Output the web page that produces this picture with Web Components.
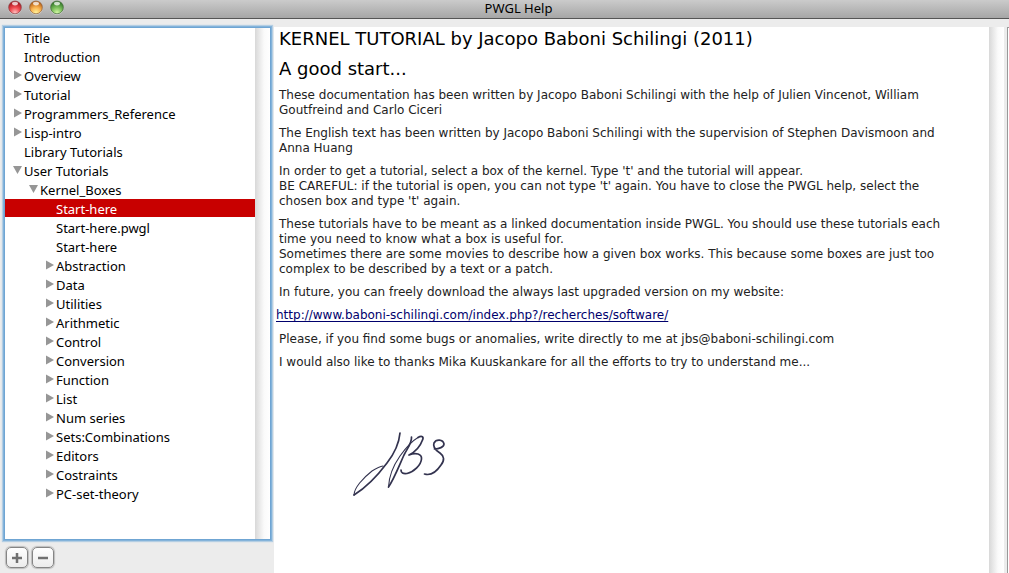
<!DOCTYPE html>
<html lang="en">
<head>
<meta charset="utf-8">
<title>PWGL Help</title>
<style>
html, body { margin: 0; height: 100%; }
body { background: #ececec; font-family: "Noto Sans", "Open Sans", sans-serif; }
</style>
</head>
<body>
<help-window></help-window>

<template id="window-t">
<style>
:host { display: flex; flex-direction: column; min-height: 100vh; background: #ececec; }
main { flex: 1; display: flex; padding-top: 8px; }
</style>
<title-bar>PWGL Help</title-bar>
<main>
<help-sidebar></help-sidebar>
<help-document></help-document>
</main>
</template>

<template id="title-t">
<style>
:host { display: grid; grid-template-columns: 1fr auto 1fr; height: 18px; box-sizing: content-box; border-bottom: 1px solid #555; background: linear-gradient(#cbcbcb, #a6a6a6); color: #000; font-size: 13px; line-height: 17px; }
.lights { display: flex; gap: 7px; padding-left: 8px; }
button { width: 14px; height: 15px; padding: 0; border: 0; background: none; }
svg { display: block; }
h1 { margin: 0; font: inherit; padding-left: 28px; }
</style>
<div class="lights">
<button aria-label="Close"><svg width="14" height="15" viewBox="0 0 14 15"><defs><radialGradient id="r" cx=".5" cy=".9" r=".8"><stop stop-color="#ffc0c0"/><stop offset=".5" stop-color="#f04a50"/><stop offset="1" stop-color="#a91820"/></radialGradient></defs><circle cx="7" cy="8" r="6.7" fill="#ddd"/><circle cx="7" cy="7.4" r="6.4" fill="url(#r)" stroke="#84464a" stroke-width=".7"/><ellipse cx="7" cy="3.6" rx="3" ry="1.8" fill="#fff" opacity=".75"/></svg></button>
<button aria-label="Minimize"><svg width="14" height="15" viewBox="0 0 14 15"><defs><radialGradient id="y" cx=".5" cy=".9" r=".8"><stop stop-color="#fff39a"/><stop offset=".5" stop-color="#fab350"/><stop offset="1" stop-color="#b96318"/></radialGradient></defs><circle cx="7" cy="8" r="6.7" fill="#ddd"/><circle cx="7" cy="7.4" r="6.4" fill="url(#y)" stroke="#8a6040" stroke-width=".7"/><ellipse cx="7" cy="3.6" rx="3" ry="1.8" fill="#fff" opacity=".75"/></svg></button>
<button aria-label="Zoom"><svg width="14" height="15" viewBox="0 0 14 15"><defs><radialGradient id="g" cx=".5" cy=".9" r=".8"><stop stop-color="#d2f8a4"/><stop offset=".5" stop-color="#7cbf5c"/><stop offset="1" stop-color="#357a2c"/></radialGradient></defs><circle cx="7" cy="8" r="6.7" fill="#ddd"/><circle cx="7" cy="7.4" r="6.4" fill="url(#g)" stroke="#47683f" stroke-width=".7"/><ellipse cx="7" cy="3.6" rx="3" ry="1.8" fill="#fff" opacity=".75"/></svg></button>
</div>
<h1><slot></slot></h1>
</template>

<template id="sidebar-t">
<style>
:host { display: flex; flex-direction: column; flex: 0 0 274px; }
.list { flex: 1; display: flex; margin: 1px 4px 0 5px; background: #fff; box-shadow: 0 0 0 1px #6fa5d3, 0 0 0 2px #84b3da, 0 0 1px 3px #b4cee3; }
nav { flex: 1; }
.track { width: 15px; background: linear-gradient(90deg, #d8d8d8, #ececec 35%, #fafafa 60%, #fff); }
footer { display: flex; gap: 4px; padding: 8px 6px 5px; }
button { width: 22px; height: 21px; padding: 0; border: 1px solid #858585; border-radius: 5px; background: linear-gradient(#fff, #ececec); box-shadow: 0 0 1px 1px #bdbdbd; display: grid; place-items: center; }
</style>
<div class="list">
<nav aria-label="Topics">
<tree-item>Title</tree-item>
<tree-item>Introduction</tree-item>
<tree-item arrow="closed">Overview</tree-item>
<tree-item arrow="closed">Tutorial</tree-item>
<tree-item arrow="closed">Programmers_Reference</tree-item>
<tree-item arrow="closed">Lisp-intro</tree-item>
<tree-item>Library Tutorials</tree-item>
<tree-item arrow="open">User Tutorials</tree-item>
<tree-item arrow="open" level="1">Kernel_Boxes</tree-item>
<tree-item level="2" selected>Start-here</tree-item>
<tree-item level="2">Start-here.pwgl</tree-item>
<tree-item level="2">Start-here</tree-item>
<tree-item arrow="closed" level="2">Abstraction</tree-item>
<tree-item arrow="closed" level="2">Data</tree-item>
<tree-item arrow="closed" level="2">Utilities</tree-item>
<tree-item arrow="closed" level="2">Arithmetic</tree-item>
<tree-item arrow="closed" level="2">Control</tree-item>
<tree-item arrow="closed" level="2">Conversion</tree-item>
<tree-item arrow="closed" level="2">Function</tree-item>
<tree-item arrow="closed" level="2">List</tree-item>
<tree-item arrow="closed" level="2">Num series</tree-item>
<tree-item arrow="closed" level="2">Sets:Combinations</tree-item>
<tree-item arrow="closed" level="2">Editors</tree-item>
<tree-item arrow="closed" level="2">Costraints</tree-item>
<tree-item arrow="closed" level="2">PC-set-theory</tree-item>
</nav>
<div class="track"></div>
</div>
<footer>
<button aria-label="Add"><svg width="12" height="12"><path d="M6 1v10M1 6h10" stroke="#707070" stroke-width="2.500"/></svg></button>
<button aria-label="Remove"><svg width="12" height="12"><path d="M1 6h10" stroke="#707070" stroke-width="2.500"/></svg></button>
</footer>
</template>

<template id="item-t">
<style>
:host { display: flex; align-items: center; box-sizing: border-box; height: 19px; padding-left: 8px; border-bottom: 1px solid #fff; font-size: 13px; line-height: 18px; color: #000; white-space: nowrap; }
:host([level="1"]) { padding-left: 24px; }
:host([level="2"]) { padding-left: 40px; }
:host([selected]) { background: #c80000; color: #fff; }
svg { flex: none; width: 11px; height: 10px; fill: none; }
span { padding-top: 2px; }
:host([arrow]) svg { fill: #969696; }
.open, :host([arrow="open"]) .closed { display: none; }
:host([arrow="open"]) .open { display: inline; }
</style>
<svg viewBox="0 0 11 10"><path class="closed" d="M1 0.500L9 5L1 9.500Z"/><path class="open" d="M0 1H9L4.500 9Z"/></svg><span><slot></slot></span>
</template>

<template id="doc-t">
<style>
:host { flex: 1; display: flex; background: #fff; font-family: "DejaVu Sans", sans-serif; font-size: 12px; line-height: 15px; color: #222; }
article { flex: 1; padding: 0 5px; }
h2 { margin: 0; font-size: 18px; font-weight: 400; line-height: 24px; color: #000; }
h2 + h2 { margin: 6px 0 7px; }
p { margin: 0 0 8px; }
p.link { margin: 0 -3px 9px; }
a { color: #00006c; text-underline-offset: 2px; }
.sign { display: block; margin: 57px 0 0 70px; }
.track { width: 15px; background: linear-gradient(90deg, #d8d8d8, #ececec 35%, #fafafa 60%, #fff); }
.edge { width: 3px; background: #ececec; border-right: 1px solid #999; }
.rim { width: 1px; border-top: 1px solid #999; }
</style>
<article>
<h2>KERNEL TUTORIAL by Jacopo Baboni Schilingi (2011)</h2>
<h2>A good start...</h2>
<p>These documentation has been written by Jacopo Baboni Schilingi with the help of Julien Vincenot, William<br>Goutfreind and Carlo Ciceri</p>
<p>The English text has been written by Jacopo Baboni Schilingi with the supervision of Stephen Davismoon and<br>Anna Huang</p>
<p>In order to get a tutorial, select a box of the kernel. Type 't' and the tutorial will appear.<br>BE CAREFUL: if the tutorial is open, you can not type 't' again. You have to close the PWGL help, select the<br>chosen box and type 't' again.</p>
<p>These tutorials have to be meant as a linked documentation inside PWGL. You should use these tutorials each<br>time you need to know what a box is useful for.<br>Sometimes there are some movies to describe how a given box works. This because some boxes are just too<br>complex to be described by a text or a patch.</p>
<p>In future, you can freely download the always last upgraded version on my website:</p>
<p class="link"><a href="http://www.baboni-schilingi.com/index.php?/recherches/software/">http://www.baboni-schilingi.com/index.php?/recherches/software/</a></p>
<p>Please, if you find some bugs or anomalies, write directly to me at jbs@baboni-schilingi.com</p>
<p>I would also like to thanks Mika Kuuskankare for all the efforts to try to understand me...</p>
<svg class="sign" width="102" height="72" viewBox="349 429 102 72" fill="none" stroke="#33334f" stroke-width="1.700" stroke-linecap="round" stroke-linejoin="round" role="img" aria-label="Signature">
<path d="M400 435C399 446 394 456 387 465C378 477 367 489 354 497"/>
<path d="M354 497C354 490 363 480 372 473C377 470 380 468.500 383 468" stroke-width="1.100"/>
<path d="M411.500 439C412 445 408 449 404 457C399 468 394 481 388.500 489"/>
<path d="M388.500 489C389 478 393 468 400 458C405 451 412 443 418 439.500" stroke-width="1.100"/>
<path d="M418 439.500C422 437 424 439 422.500 442C420 449 415 454 409 457C416 454 422 456 421.500 461C421 467 414 474 407 475.500C403 476 401 475 401 472"/>
<path d="M434.500 451C439 451 444 449 444 446C443 441 436 441 434 445C432 450 437 453 440 455C444 458 445 462 441 467C437 473 431 478 424.500 476"/>
</svg>
</article>
<div class="track"></div><div class="edge"></div><div class="rim"></div>
</template>

<script>
const define = (name, templateId) => customElements.define(name, class extends HTMLElement {
  constructor() {
    super();
    this.attachShadow({ mode: "open" }).append(document.getElementById(templateId).content.cloneNode(true));
  }
});
define("tree-item", "item-t");
define("title-bar", "title-t");
define("help-sidebar", "sidebar-t");
define("help-document", "doc-t");
define("help-window", "window-t");
</script>
</body>
</html>
